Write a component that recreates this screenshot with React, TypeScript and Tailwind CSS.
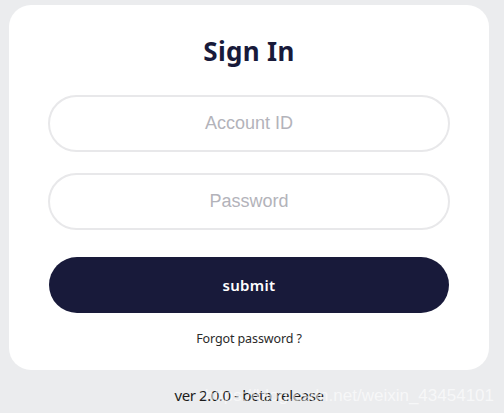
export default function App() {
  return (
    <div className="relative h-[413px] w-full overflow-hidden bg-[#ebecee] pl-[9px] pt-[5px]" style={{ fontFamily: '"Noto Sans", sans-serif' }}>
      <div className="flex h-[365px] w-[480px] flex-col items-center rounded-[22px] bg-white px-[40px]">
        <h1 className="mt-[28px] text-[26px] font-bold leading-[36px] tracking-[0.3px] text-[#181a3a]">Sign In</h1>

        <input
          placeholder="Account ID"
          className="mt-[26px] h-[57px] w-[402px] rounded-full border-2 border-[#e8e8ea] bg-white text-center text-[18px] text-[#333] outline-none placeholder:text-[#b3b3ba]"
          style={{ fontFamily: '"Liberation Sans", Arial, sans-serif' }}
        />
        <input
          type="password"
          placeholder="Password"
          className="mt-[21px] h-[57px] w-[402px] rounded-full border-2 border-[#e8e8ea] bg-white text-center text-[18px] text-[#333] outline-none placeholder:text-[#b3b3ba]"
          style={{ fontFamily: '"Liberation Sans", Arial, sans-serif' }}
        />

        <button className="mt-[27px] h-[56px] w-[400px] self-start rounded-full bg-[#181a3a] text-[15px] font-semibold tracking-[0.3px] text-white">
          submit
        </button>

        <a className="mt-[17px] text-[12.5px] tracking-[-0.1px] text-[#2a2a2a]">Forgot password ?</a>
      </div>

      <div className="mt-[14px] w-[480px] text-center text-[15px] tracking-[-0.4px] text-[#1c1c1c]">ver 2.0.0 - beta release</div>

      {/* watermark */}
      <div
        className="absolute right-[10px] top-[383px] text-[17px] text-white/60"
        style={{ fontFamily: '"Liberation Sans", Arial, sans-serif' }}
      >
        https://blog.csdn.net/weixin_43454101
      </div>
    </div>
  )
}
